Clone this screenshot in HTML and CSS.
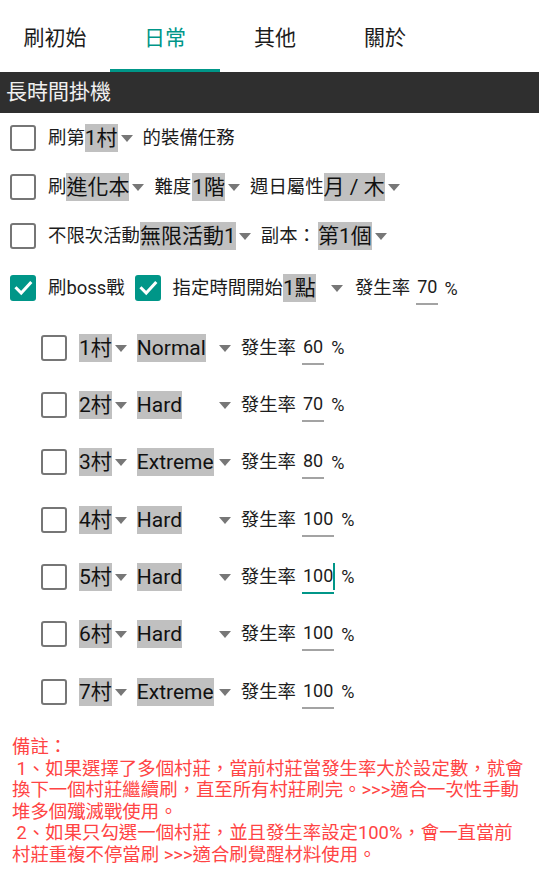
FILE: index.html
```html
<!DOCTYPE html>
<html lang="zh-Hant">
<head>
<meta charset="utf-8">
<title>長時間掛機</title>
<link rel="stylesheet" href="styles.css">
</head>
<body>
<div class="app">
  <nav class="tabs">
    <div class="tab">刷初始</div>
    <div class="tab active">日常</div>
    <div class="tab">其他</div>
    <div class="tab">關於</div>
  </nav>

  <div class="section-title">長時間掛機</div>

  <div class="rows">
    <div class="row">
      <span class="cb"></span>
      <span class="label">刷第</span>
      <span class="spinner"><span class="sp-val">1村</span><span class="sp-arrow"></span></span>
      <span class="label">的裝備任務</span>
    </div>
    <div class="row">
      <span class="cb"></span>
      <span class="label">刷</span>
      <span class="spinner"><span class="sp-val">進化本</span><span class="sp-arrow"></span></span>
      <span class="label">難度</span>
      <span class="spinner tight"><span class="sp-val">1階</span><span class="sp-arrow"></span></span>
      <span class="label">週日屬性</span>
      <span class="spinner"><span class="sp-val">月 / 木</span><span class="sp-arrow"></span></span>
    </div>
    <div class="row">
      <span class="cb"></span>
      <span class="label">不限次活動</span>
      <span class="spinner"><span class="sp-val">無限活動1</span><span class="sp-arrow"></span></span>
      <span class="label colon">副本：</span>
      <span class="spinner"><span class="sp-val">第1個</span><span class="sp-arrow"></span></span>
    </div>
    <div class="row row-boss">
      <span class="cb checked"><svg viewBox="0 0 26 26" width="26" height="26"><path d="M6.5 13.3 L11.2 18 L20.3 8" fill="none" stroke="#fff" stroke-width="3" stroke-linecap="square"/></svg></span>
      <span class="label">刷boss戰</span>
      <span class="cb checked second"><svg viewBox="0 0 26 26" width="26" height="26"><path d="M6.5 13.3 L11.2 18 L20.3 8" fill="none" stroke="#fff" stroke-width="3" stroke-linecap="square"/></svg></span>
      <span class="label">指定時間開始</span>
      <span class="spinner fixed-hour"><span class="sp-val">1點</span><span class="sp-arrow"></span></span>
      <span class="label">發生率</span>
      <span class="rate">70</span>
      <span class="pct">%</span>
    </div>
  </div>

  <div class="villages">
    <div class="vrow">
      <span class="cb"></span>
      <span class="spinner v"><span class="sp-val">1村</span><span class="sp-arrow"></span></span>
      <span class="spinner level"><span class="sp-val">Normal</span><span class="sp-arrow"></span></span>
      <span class="label">發生率</span>
      <span class="rate">60</span>
      <span class="pct">%</span>
    </div>
    <div class="vrow">
      <span class="cb"></span>
      <span class="spinner v"><span class="sp-val">2村</span><span class="sp-arrow"></span></span>
      <span class="spinner level"><span class="sp-val">Hard</span><span class="sp-arrow"></span></span>
      <span class="label">發生率</span>
      <span class="rate">70</span>
      <span class="pct">%</span>
    </div>
    <div class="vrow">
      <span class="cb"></span>
      <span class="spinner v"><span class="sp-val">3村</span><span class="sp-arrow"></span></span>
      <span class="spinner level"><span class="sp-val">Extreme</span><span class="sp-arrow"></span></span>
      <span class="label">發生率</span>
      <span class="rate">80</span>
      <span class="pct">%</span>
    </div>
    <div class="vrow">
      <span class="cb"></span>
      <span class="spinner v"><span class="sp-val">4村</span><span class="sp-arrow"></span></span>
      <span class="spinner level"><span class="sp-val">Hard</span><span class="sp-arrow"></span></span>
      <span class="label">發生率</span>
      <span class="rate">100</span>
      <span class="pct">%</span>
    </div>
    <div class="vrow">
      <span class="cb"></span>
      <span class="spinner v"><span class="sp-val">5村</span><span class="sp-arrow"></span></span>
      <span class="spinner level"><span class="sp-val">Hard</span><span class="sp-arrow"></span></span>
      <span class="label">發生率</span>
      <span class="rate focused">100<span class="caret"></span></span>
      <span class="pct">%</span>
    </div>
    <div class="vrow">
      <span class="cb"></span>
      <span class="spinner v"><span class="sp-val">6村</span><span class="sp-arrow"></span></span>
      <span class="spinner level"><span class="sp-val">Hard</span><span class="sp-arrow"></span></span>
      <span class="label">發生率</span>
      <span class="rate">100</span>
      <span class="pct">%</span>
    </div>
    <div class="vrow">
      <span class="cb"></span>
      <span class="spinner v"><span class="sp-val">7村</span><span class="sp-arrow"></span></span>
      <span class="spinner level"><span class="sp-val">Extreme</span><span class="sp-arrow"></span></span>
      <span class="label">發生率</span>
      <span class="rate">100</span>
      <span class="pct">%</span>
    </div>
  </div>

  <div class="notes">
    <div class="nl">備註：</div>
    <div class="nl"> 1、如果選擇了多個村莊，當前村莊當發生率大於設定數，就會</div>
    <div class="nl">換下一個村莊繼續刷，直至所有村莊刷完。&gt;&gt;&gt;適合一次性手動</div>
    <div class="nl">堆多個殲滅戰使用。</div>
    <div class="nl"> 2、如果只勾選一個村莊，並且發生率設定100%，會一直當前</div>
    <div class="nl">村莊重複不停當刷 &gt;&gt;&gt;適合刷覺醒材料使用。</div>
  </div>
</div>
</body>
</html>
```

FILE: styles.css
```css
* { box-sizing: border-box; }

html, body {
  margin: 0;
  padding: 0;
  background: #fff;
}

body {
  font-family: Roboto, "Noto Sans CJK JP", "Noto Sans CJK TC", sans-serif;
  color: #212121;
}

.app {
  width: 539px;
}

/* Tabs */
.tabs {
  display: flex;
  height: 72px;
}

.tab {
  width: 110px;
  height: 72px;
  display: flex;
  align-items: center;
  justify-content: center;
  font-size: 21px;
  color: #1b1b1b;
  border-bottom: 3px solid transparent;
  padding-top: 2px;
}

.tab.active {
  color: #009688;
  border-bottom-color: #009688;
}

/* Section title */
.section-title {
  height: 41px;
  background: #2f2f2f;
  color: #f0f0f0;
  font-size: 21px;
  line-height: 41px;
  padding-left: 6px;
}

/* Rows */
.rows {
  display: flex;
  flex-direction: column;
}

.row {
  height: 49px;
  display: flex;
  align-items: center;
  padding-left: 10px;
}

.row-boss {
  height: 56px;
}

.label {
  font-size: 18.4px;
  line-height: 24px;
  color: #1c1c1c;
  white-space: nowrap;
}

.label.colon {
  margin-right: 2px;
}

/* Checkbox */
.cb {
  width: 26px;
  height: 26px;
  border: 2.6px solid #767676;
  border-radius: 3px;
  margin-right: 12px;
  flex: none;
}

.cb.checked {
  border: none;
  background: #009688;
}

.cb.second {
  margin-left: 10px;
}

.cb.checked svg {
  display: block;
}

/* Spinner */
.spinner {
  display: inline-flex;
  align-items: center;
  margin-right: 10px;
  flex: none;
}

.spinner.tight {
  margin-left: 1px;
}

.sp-val {
  background: #c0c0c0;
  color: #111;
  font-size: 21px;
  line-height: 28px;
  height: 28px;
  white-space: nowrap;
}

.sp-arrow {
  width: 0;
  height: 0;
  border-left: 6px solid transparent;
  border-right: 6px solid transparent;
  border-top: 7px solid #777;
  margin-left: 3px;
  margin-top: 1px;
}

.spinner.fixed-hour {
  width: 60px;
  justify-content: space-between;
  margin-right: 12px;
}

/* Rate input */
.rate {
  display: inline-block;
  position: relative;
  font-size: 18px;
  line-height: 22px;
  padding: 5px 1px 5px 1px;
  border-bottom: 2px solid #a3a3a3;
  margin-left: 6px;
  color: #1c1c1c;
}

.rate.focused {
  border-bottom-color: #009688;
}

.caret {
  position: absolute;
  right: -1px;
  top: 3px;
  width: 2px;
  height: 27px;
  background: #009688;
}

.pct {
  font-size: 18px;
  margin-left: 6px;
  color: #1c1c1c;
}

/* Village rows */
.villages {
  margin-top: 3px;
  display: flex;
  flex-direction: column;
}

.vrow {
  height: 57.33px;
  display: flex;
  align-items: center;
  padding-left: 41px;
}

.spinner.v {
  margin-right: 10px;
}

.spinner.level {
  width: 94px;
  justify-content: space-between;
  margin-right: 10px;
}

.vrow .rate {
  margin-left: 6px;
}

.vrow .pct {
  margin-left: 7px;
}

/* Notes */
.notes {
  margin-top: 16px;
  padding-left: 12px;
  color: #ff4444;
  font-size: 18.4px;
  line-height: 21.5px;
}

.nl {
  white-space: pre;
}
```
